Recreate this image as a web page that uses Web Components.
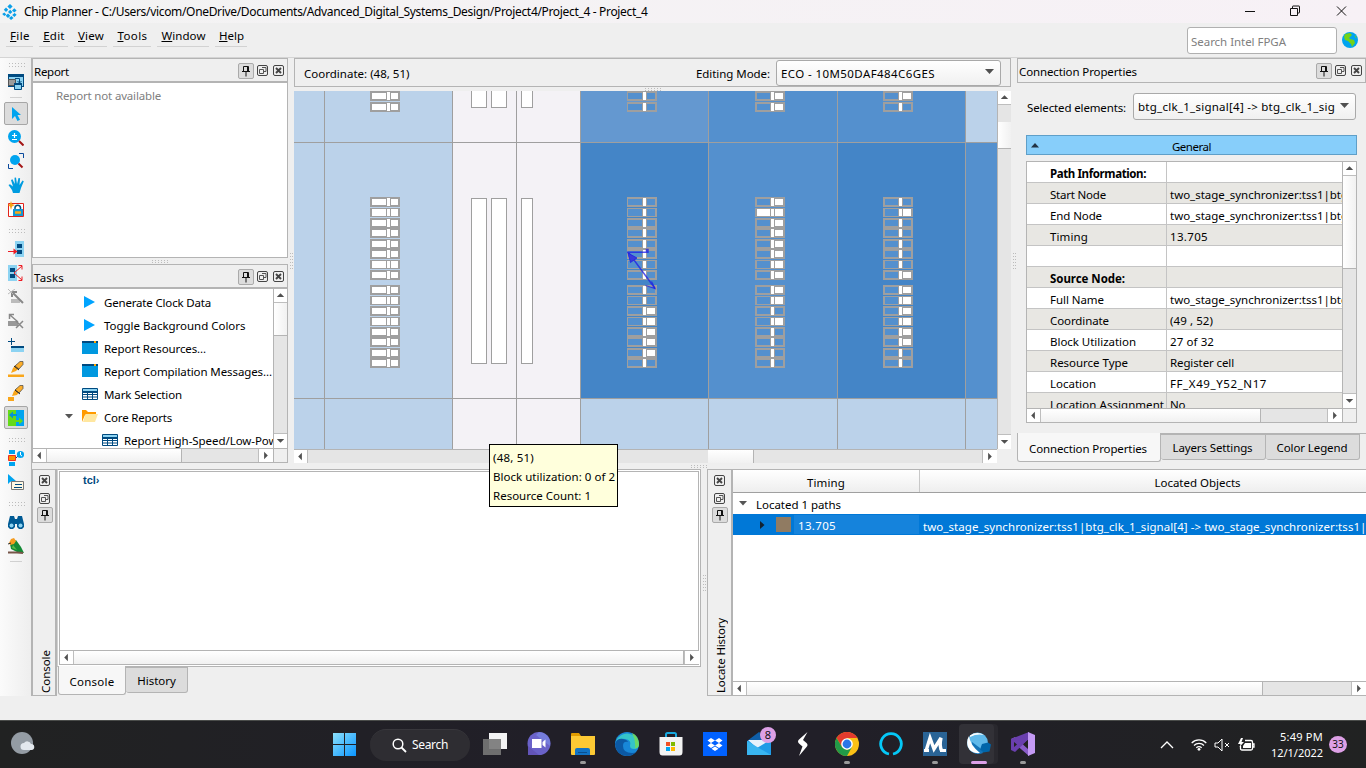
<!DOCTYPE html>
<html lang="en">
<head>
<meta charset="utf-8">
<title>Chip Planner</title>
<style>
html,body{margin:0;padding:0;width:1366px;height:768px;overflow:hidden;background:#efefef}
body{font:11.5px/16px "Noto Sans","Open Sans",sans-serif;color:#000}
</style>
</head>
<body>
<chip-planner></chip-planner>
<script>
const ICONS = {
logo:`<g fill="#0b9fe8"><path d="M8 0l2.600 2.500L8 5 5.400 2.500zM4 3.600l2.200 2.200L4 8 1.800 5.800zM8.200 5.700l2.200 2.200-2.200 2.200L6 7.900zM12.300 4.200l2.300 2.200-2.300 2.200L10 6.400zM2.300 8.500l2 2-2 1.500L.2 10zM6 9.600l2.300 2.200L6 14l-2.300-2.200zM12.600 9l2 1.800-2.200 2.300-2.200-2.200zM9.500 12l2 2L9 16l-2-2z"/></g>`,
windows:`<path fill="#004a80" d="M0 0h16v13H0z"/><path fill="#8cd3f2" d="M1 3h14v9H1z"/><path fill="#9c9c9c" stroke="#555" d="M.5 5.500h7v6h-7z"/><path d="M7 4.500h4.500V9M9.500 7l2 2 2-2" stroke="#004a80" fill="none"/><path fill="#8cd3f2" stroke="#004a80" d="M6.500 9.500h7v6h-7z"/><path fill="#004a80" d="M6 9h8v2H6z"/>`,
cursor:`<path fill="#00a4ef" d="M4 1v12l3-3 2.500 5 2.500-1.200L9.500 9H13z"/>`,
zoom:`<circle cx="6.500" cy="6.500" r="6.500" fill="#00a4ef"/><path d="M11 11l4.500 4.500" stroke="#a31515" stroke-width="2"/><path d="M4 5.500h5M6.500 3v5M4 9.500h5" stroke="#fff" stroke-width="1.200"/>`,
zoomfit:`<circle cx="7" cy="7" r="5" fill="#00a4ef"/><path d="M10.500 10.500l4 4" stroke="#a31515" stroke-width="2"/><path d="M11 .5h4.500V5M.5 11v4.500H5" stroke="#0b4a9c" fill="none"/>`,
hand:`<path fill="#009ce0" d="M5 16l-1-3-3.500-5 1.500-.7 3 2.200L3 3l1.500-.7L6.800 7 6.500.8 8 .5 9 7l1.500-6 1.600.3L11.500 8 14.500 3.500l1.300.8L13 11l-1.500 5z"/>`,
lock:`<path fill="#fff" stroke="#e2231a" d="M.5 2.500h15v13H.5z"/><path fill="#1199d6" d="M5 8h10v7H5z"/><path d="M7 8V6.500a2.800 2.800 0 015.500 0V8" stroke="#00517f" stroke-width="1.500" fill="none"/><path d="M7 11.500h6" stroke="#ffa915" stroke-width="2.500"/><path fill="#f5a316" d="M3 0l1 3 3 1-3 1.500L3 9 2 5.500 0 4l2-1z"/>`,
fanin:`<path fill="#8cd3f2" d="M7 0h9v16H7z"/><path fill="#004a80" d="M9 3h5v4H9zM9 9h5v4H9z"/><path d="M0 10.500h7" stroke="#ed1c24"/><path fill="#ed1c24" d="M5.500 7.500l4 3-4 3z"/>`,
fanout:`<path fill="#8cd3f2" d="M0 0h9v16H0z"/><path fill="#004a80" d="M2 3h5v4H2zM2 9h5v4H2z"/><path d="M6 8l8-7M6 8l8 7M10.500.5h3.500v4M10.500 15.500h3.500v-4" stroke="#ed1c24" fill="none"/>`,
grayconn:`<path fill="#bbb" d="M3 10h9v4H3z"/><path d="M4 3l11 11M4 8V3h5" stroke="#888" stroke-width="2" fill="none"/><path d="M0 5l7-5M0 0l5 5" stroke="#bbb"/>`,
graydel:`<path fill="#999" d="M0 8h10v5H0z"/><path d="M2 2l8 7M1.500 6V1.500H6M8 8l7 7M15 8l-7 7" stroke="#888" stroke-width="1.500" fill="none"/>`,
addrow:`<path d="M0 4.500h7M3.500 1v7" stroke="#004a80"/><path fill="#004a80" d="M3 9h13v3H3z"/><path fill="#8cd3f2" d="M3 11h13v4H3z"/>`,
pen:`<path fill="#f9a61a" d="M0 13.500h16V16H0zM3 12l2-5 4-4 3 3-4 4z"/><path d="M7 5l5-4.500h3v3L11 8z" fill="#fcae2b" stroke="#444" stroke-width=".7"/><path d="M6 5l5 4" stroke="#222"/>`,
pen2:`<path fill="#f9a61a" d="M0 12h6v4H0zM4 11l2-5 3-3 3 3-3 4z"/><path d="M7 5l5-4.500h3v3L11 8z" fill="#fcae2b" stroke="#444" stroke-width=".7"/><path d="M7 5l5 4" stroke="#222"/>`,
swap:`<path fill="#65da19" d="M0 0h8v16H0z"/><path fill="#00a4ef" d="M8 0h8v16H8z"/><path fill="#0092d8" d="M1 5l4-3.500V4h4v2H5v2.500z"/><path fill="#65da19" d="M15 11l-4-3.500V10H7v2h4v2.500z"/>`,
clocknode:`<path fill="#00a4ef" d="M1 0h6v4H1zM1 12h6v4H1z"/><path fill="#ff9200" stroke="#ee3124" d="M.5 5.500h7v5h-7z"/><path d="M8 8l3-3" stroke="#004a80"/><circle cx="12.500" cy="4.500" r="3.600" fill="#00a4ef"/><path d="M12.500 2v3l1.500 1" stroke="#fff" fill="none"/>`,
note:`<path fill="#00a4ef" d="M0 0v10l2.500-2.500L5 12l2-1-2-4h3z"/><path fill="#fff8e3" stroke="#777" d="M3.500 7.500h12v8h-12z"/><path d="M7 10.500h7M6 13.500h8" stroke="#004a80"/>`,
binoc:`<path fill="#005a94" d="M2 2h4l1 3h2l1-3h4l2 8v3l-2 2h-3l-2-2v-3H7v3l-2 2H2l-2-2v-3z"/><circle cx="3.500" cy="11.500" r="2" fill="#8cd3f2"/><circle cx="12.500" cy="11.500" r="2" fill="#8cd3f2"/>`,
bird:`<path fill="#138a36" d="M2 6l6-4 5 7 3 6-7-1-6-3z"/><path fill="#f59c20" d="M1 5l2-4 3-1 2 3-2 3-4 1z"/><path fill="#5aba47" d="M5 7l4 5-5-2z"/><path d="M0 14.500h9l6 .5" stroke="#765548" stroke-width="2" fill="none"/><path d="M0 6l3-1" stroke="#333"/>`,
play:`<path fill="#00a4ff" d="M2 2l11 6-11 6z"/>`,
win:`<path fill="#0098df" d="M0 2h16v12H0z"/><path fill="#004a80" d="M0 1h16v2H0z"/><path fill="#ffa600" d="M12 1h2v2h-2z"/>`,
table:`<path fill="#fff" stroke="#004a80" d="M.5 2.500h15v11H.5z"/><path fill="#8cd3f2" d="M1 3h14v2H1z"/><path d="M0 6h16" stroke="#004a80" stroke-width="2"/><path d="M0 8.500h16M0 11h16M5.500 5v8M10.500 5v8" stroke="#004a80"/>`,
folder:`<path fill="#ff9a00" d="M0 1h4l2 2h8v3H3l-3 7z"/><path fill="#ffe7a0" d="M3.500 5H16l-3 8H1z"/>`,
pin:`<path d="M5.500 8.500V3.500h5v5M4 8.500h8M9.500 3v5M8 9v4.500" stroke="#111" fill="none"/>`,
float:`<rect x="2.500" y="2.500" width="10" height="10" rx="1.500" fill="none" stroke="#444"/><path d="M7 4.500h4v4H9M4.500 6.500h4v4h-4z" fill="none" stroke="#555"/>`,
close:`<rect x="2.500" y="2.500" width="10" height="10" rx="1.500" fill="none" stroke="#444"/><path d="M5 5l5 5M10 5l-5 5" stroke="#444" stroke-width="1.900"/>`,
globe:`<circle cx="8" cy="8" r="8" fill="#00a4ef"/><path fill="#73d216" d="M3 2l5-1 2 2-3 3 1 1 4 1 1 3-3 4-1-3-3-3-3-1-1-3zM13 3l2 3-2-1z"/>`
};
const def = (tag, html, css, init) => customElements.define(tag, class extends HTMLElement {
  connectedCallback(){
    if(this.shadowRoot) return;
    this.attachShadow({mode:'open'}).innerHTML = `<style>*{box-sizing:border-box}${css}</style>` + (typeof html==='function'?html(this):html);
    if(init) init(this);
  }
});
const G='#b4b4b4';

def('ui-icon', e=>`<svg viewBox="0 0 16 16">${ICONS[e.getAttribute('n')]}</svg>`, `:host{display:block;width:16px;height:16px;flex:none}svg{display:block;width:100%;height:100%}`);

def('scroll-bar', e=>{
  const v=e.hasAttribute('v'),a=+e.getAttribute('at'),l=+e.getAttribute('len');
  const tri=v?['M3 8.500h8L7 4.500z','M3 5.500h8L7 9.500z']:['M8.500 3v8l-4-4z','M5.500 3v8l4-4z'];
  return `<i class="b"><svg width="13" height="13" viewBox="0 0 14 14"><path d="${tri[0]}"/></svg></i><i class="t" style="flex:0 0 ${a}px"></i><i class="h" style="flex:0 0 ${l}px"></i><i class="t" style="flex:1"></i><i class="b e"><svg width="13" height="13" viewBox="0 0 14 14"><path d="${tri[1]}"/></svg></i>`;
},`:host{display:flex;height:14px;border-top:1px solid ${G};background:#e5e5e5;flex:none}
:host([v]){flex-direction:column;width:14px;height:auto;border-top:0;border-left:1px solid ${G}}
i{display:block}.b{flex:0 0 14px;background:#fff;border-right:1px solid #bebebe;display:flex;align-items:center;justify-content:center}
.e{border-right:0;border-left:1px solid #bebebe;padding-right:1px}.h{background:linear-gradient(#fff,#f1f1f1);border-right:1px solid ${G}}
:host([v]) .b{border-right:0;border-bottom:1px solid #bebebe}:host([v]) .e{border-bottom:0;border-left:0;border-top:1px solid #bebebe;padding:0 0 1px}
:host([v]) .h{background:linear-gradient(90deg,#fff,#f1f1f1);border-right:0;border-bottom:1px solid ${G}}path{fill:#505050}svg{flex:none}`);

def('dock-buttons',`<b><ui-icon n="pin"></ui-icon></b><ui-icon n="float"></ui-icon><ui-icon n="close"></ui-icon>`,
`:host{display:flex;align-items:center}b{width:16px;height:16px;border:1px solid #aaa;border-radius:2px;background:#dcdcdc;display:flex;align-items:center;justify-content:center;margin-right:1px}
:host([v]){flex-direction:column-reverse}:host([v]) b{margin:0}:host([v]) ui-icon[n=close]{margin-bottom:2px}`);

def('dock-title',`<slot></slot><dock-buttons></dock-buttons>`,
`:host{display:flex;height:25px;border:1px solid ${G};border-bottom:2px solid ${G};align-items:center;padding:4px 0 0 1px;background:#efefef;flex:none}dock-buttons{margin:var(--btn-top,-3px) 0 0 auto}`);

def('split-grip',`<i></i>`,`:host{display:flex;align-items:center;justify-content:center;flex:none}
i{background:conic-gradient(from 270deg at 1px 1px,#bcbcbc 90deg,transparent 0) 0 0/3px 2px;width:16px;height:3px}:host([v]) i{width:3px;height:16px;background-size:2px 3px}`);

def('combo-box',`<slot></slot><svg width="9" height="6"><path d="M0 0h9L4.500 5z" fill="#505050"/></svg>`,
`:host{display:flex;align-items:center;border:1px solid #a9a9a9;border-radius:3px;background:linear-gradient(#fff,#f0f0f0);padding:2px 6px 0 4px;overflow:hidden;white-space:nowrap}svg{margin:-3px 0 0 auto;flex:none}`);

def('tool-bar',()=>{
  const g='<i class="g"></i>', ic=(n,h=24)=>`<span style="height:${h}px"><ui-icon n="${n}"></ui-icon></span>`, on=n=>`<span class="on"><ui-icon n="${n}"></ui-icon></span>`;
  return '<i class="g first"></i>'+ic('windows')+'<i class="s"></i>'+on('cursor')+ic('zoom',23)+ic('zoomfit')+ic('hand')+ic('lock')+g+ic('fanin')+ic('fanout')+ic('grayconn')+ic('graydel')+ic('addrow')+ic('pen')+ic('pen2')+on('swap')+g+ic('clocknode')+ic('note')+g+ic('binoc')+ic('bird')+'<i class="s"></i>';
},`:host{display:flex;flex-direction:column;align-items:center;width:31px;background:linear-gradient(90deg,#fbfbfb,#eee);flex:none;padding-top:4px}
span{display:flex;align-items:center;flex:none}.on{width:24px;height:23px;border:1px solid #a6a6a6;border-radius:2px;background:#dcdcdc;justify-content:center;margin:1px 0 1px 0}
.g{width:16px;height:4px;margin:8px 0 4px 2px;flex:none;background:conic-gradient(from 270deg at 1px 1px,#bcbcbc 90deg,transparent 0) 0 0/3px 3px}
.g.first{margin-top:1px;margin-bottom:3px}
.s{width:12px;height:1px;background:#d0d0d0;margin:3px 0 3px;flex:none}`);

def('task-row',e=>`${e.hasAttribute('open')?'<svg width="8" height="5"><path d="M0 0h8L4 4.500z" fill="#555"/></svg>':''}<ui-icon n="${e.getAttribute('icon')}"></ui-icon><slot></slot>`,
`:host{display:flex;height:23px;padding-left:49px;align-items:center;white-space:nowrap}
:host([sub]){padding-left:69px}:host([open]){padding-left:32px}svg{margin:-2px 9px 0 0;flex:none}ui-icon{margin:-2px 6px 0 0}`);

def('prop-row',e=>`<div><slot></slot></div><div class="v"><slot name="v"></slot></div>`,
`:host{display:grid;grid-template-columns:139px 1fr;height:21px;border-bottom:1px solid #c4c4c4;background:#fff;white-space:nowrap}
:host(:nth-child(even)){background:#e8e7e3}div{padding:4px 0 0 23px;overflow:hidden;height:20px;line-height:16px}.v{border-left:1px solid #c4c4c4;padding-left:3px}:host([hd]){font-weight:700}`);

def('chip-map',()=>{
  let s='';const r=(x,y,w,h,f)=>s+=`<rect x="${x}" y="${y}" width="${w}" height="${h}" fill="${f}"/>`;
  const L='#bbd2ea',W='#f4f2f6',M='#5490ce',D='#4485c7',Gr='#9f9f9f';
  r(294,91,158,358,L);r(452,91,128,358,W);r(580,91,128,51,'#6498d0');r(708,91,257,51,M);r(965,91,32,51,L);
  r(580,142,128,256,D);r(708,142,129,256,M);r(837,142,128,256,D);r(965,142,32,256,M);r(580,398,417,51,L);
  [324,452,516,580,708,837,965].forEach(x=>r(x,91,1,358,Gr));[142,398].forEach(y=>r(294,y,703,1,Gr));
  [[471,16],[491,16],[521,12]].forEach(([x,w])=>{[[80,28],[198,166]].forEach(([y,h])=>{r(x,y,w,h,Gr);r(x+1,y+1,w-2,h-2,'#fff')})});
  const ys=[91,102,197,208,218,228,239,249,260,270,285,296,306,317,327,337,348,358];
  const cols=[[370,'all','all'],[627,[12,13,14,15,16],[]],[755,[0,1,2,3,4,5,6,7,8,9,10,11,13],[3]],[883,[0,3,9,10,11,12,13,14,15],[]]];
  cols.forEach(([x,rt,lf])=>ys.forEach((y,i)=>{
    const short=[208,260,296,317].includes(y), h=short?9:10, lt=x===370, on=a=>a==='all'||a.includes(i);
    const l0=x===627?1:2,l1=lt?16:15,b=lt?17:16,q=lt?21:20;
    r(x,y,30,h,Gr);r(x+l0,y+(short?1:2),l1-l0,short?7:6,on(lf)?'#fff':M);r(x+b,y+1,3,short?7:8,'#fff');r(x+q,y+(short?1:2),28-q,short?7:6,on(rt)?'#fff':M);
  }));
  s+=`<g stroke="#1e1ee6" stroke-opacity=".75" fill="none"><path stroke-width="1.500" d="M627 252.200h19.500v-2.700h1.500v3.500M628.500 252.500L655 288.500"/><path fill="#3a3ad8" d="M628 253l9 5-6.500 4.500z"/><path stroke-width="1.200" d="M645.500 285.500l9.500 3-3.500-7"/></g>`;
  return `<svg width="703" height="358" viewBox="294 91 703 358">${s}</svg>`;
},`:host{display:block;width:703px;height:358px}svg{display:block}`);

def('dock-side',`<dock-buttons v></dock-buttons><div><slot></slot></div>`,
`:host{display:flex;flex-direction:column;align-items:center;width:26px;border:1px solid ${G};border-right-width:2px;flex:none;padding-top:3px}div{margin-top:auto;writing-mode:vertical-rl;transform:rotate(180deg);padding-top:2px;line-height:17px;margin-right:-2px}`);

def('tab-item',`<slot></slot>`,`:host{display:flex;align-items:center;justify-content:center;height:26px;background:#dcdcdc;border:1px solid ${G};border-left-width:0;border-radius:0 0 3px 3px;flex:none;padding:2px 1px 0 0}
:host([on]){height:28px;background:#f7f7f7;border-top:0;border-left-width:1px;padding:3px 2px 0 0}`);

def('report-panel',`<dock-title><t-x w="35">Report</t-x></dock-title><div><t-x w="105">Report not available</t-x></div>`,
`:host{display:flex;flex-direction:column;height:200px;flex:none}div{flex:1;background:#fff;border:1px solid ${G};border-top:0;padding:5px 0 0 23px;color:#808080}`);

def('tasks-panel',`<dock-title><t-x w="30">Tasks</t-x></dock-title><section><div class="r"><div class="l">
<task-row icon="play"><t-x w="107">Generate Clock Data</t-x></task-row><task-row icon="play"><t-x w="141.500">Toggle Background Colors</t-x></task-row>
<task-row icon="win"><t-x w="102">Report Resources...</t-x></task-row><task-row icon="win"><t-x w="168">Report Compilation Messages...</t-x></task-row>
<task-row icon="table"><t-x w="78">Mark Selection</t-x></task-row><task-row open icon="folder"><t-x w="68">Core Reports</t-x></task-row>
<task-row sub icon="table"><t-x w="153.500">Report High-Speed/Low-Pow</t-x></task-row></div><scroll-bar v at="0" len="33"></scroll-bar></div>
<div class="h"><scroll-bar at="0" len="135"></scroll-bar><i></i></div></section>`,
`:host{display:flex;flex-direction:column;height:199px;flex:none}section{display:flex;flex-direction:column;flex:1;min-height:0;background:#fff;border:1px solid ${G};border-top:0}
.r{display:flex;flex:1;min-height:0}.l{flex:1;overflow:hidden;padding-top:2px;min-width:0}.h{display:flex}.h scroll-bar{flex:1}.h i{width:14px;border:solid ${G};border-width:1px 0 0 1px;background:#efefef}`);

def('floor-panel',`<header><t-x w="105.500">Coordinate: (48, 51)</t-x><span></span><t-x w="74">Editing Mode:</t-x><combo-box><t-x w="154">ECO - 10M50DAF484C6GES</t-x></combo-box></header>
<split-grip></split-grip><main><chip-map></chip-map><scroll-bar v at="17" len="27"></scroll-bar></main><footer><scroll-bar at="400" len="46"></scroll-bar></footer>
<aside><t-x w="41">(48, 51)</t-x><t-x w="122">Block utilization: 0 of 2</t-x><t-x w="98">Resource Count: 1</t-x></aside>`,
`:host{display:flex;flex-direction:column;width:717px;flex:none;position:relative}header{height:29px;border:1px solid ${G};display:flex;align-items:center;padding:1px 9px 0 9px}
header>t-x{margin-top:2px}span{flex:1}combo-box{width:225px;height:26px;margin:-1px 0 0 6px}split-grip{height:4px}main{display:flex}main scroll-bar{height:358px}footer{width:703px;display:flex}footer scroll-bar{flex:1}
aside{position:absolute;left:195px;top:386px;width:129px;height:63px;background:#ffffdc;border:1px solid #000;display:flex;flex-direction:column;padding:3px 3px;line-height:19px}`);

const N='two_stage_synchronizer:tss1|btg';
const P=[['Path Information:',96,'',0,1],['Start Node',56,N,178],['End Node',52,N,178],['Timing',38,'13.705',38],['',0,'',0],['Source Node:',75,'',0,1],['Full Name',54,N,178],['Coordinate',59,'(49 , 52)',43],['Block Utilization',86,'27 of 32',44],['Resource Type',78,'Register cell',64],['Location',46,'FF_X49_Y52_N17',97],['Location Assignment',114,'No',15]];
def('connection-panel',`<dock-title><t-x w="118">Connection Properties</t-x></dock-title>
<div class="sel"><t-x w="99">Selected elements:</t-x><combo-box><t-x w="197">btg_clk_1_signal[4] -&gt; btg_clk_1_sig</t-x></combo-box></div>
<div class="gen"><svg width="8" height="5"><path d="M0 4.500h8L4 0z" fill="#234"/></svg><t-x w="39">General</t-x></div>
<div class="tb"><div class="r"><div class="l">${P.map(p=>`<prop-row ${p[4]?'hd':''}>${p[0]?`<t-x w="${p[1]}">${p[0]}</t-x>`:''}${p[2]?`<t-x slot="v" w="${p[3]}">${p[2]}</t-x>`:''}</prop-row>`).join('')}</div><scroll-bar v at="0" len="93"></scroll-bar></div>
<div class="h"><scroll-bar at="0" len="220"></scroll-bar><i></i></div></div>
<div class="tabs"><tab-item on style="width:144px"><t-x w="118">Connection Properties</t-x></tab-item><tab-item style="width:105px"><t-x w="80">Layers Settings</t-x></tab-item><tab-item style="width:94px"><t-x w="71">Color Legend</t-x></tab-item></div>`,
`:host{display:flex;flex-direction:column;flex:1;min-width:0}dock-title{border-bottom-width:1px;padding-top:2px;--btn-top:-1px}.sel{display:flex;align-items:center;margin:10px 10px 0 10px;justify-content:space-between}.sel t-x{margin-top:2px}combo-box{width:223px;height:27px}.sel combo-box t-x{margin-top:-2px}
.gen{margin:15px 9px 0;height:20px;background:#87cefa;border:1px solid #5f9fc8;display:grid;grid-template-columns:8px 1fr 8px;padding:0 4px;align-items:center;justify-items:center}.gen t-x{margin-top:3px}
.tb{margin:6px 9px 0;height:262px;border:1px solid ${G};display:flex;flex-direction:column;background:#fff}.r{display:flex;flex:1;min-height:0}.l{flex:1;min-width:0;overflow:hidden}.h{display:flex}.h scroll-bar{flex:1}.h i{width:14px;border:solid ${G};border-width:1px 0 0 1px;background:#efefef}
.tabs{display:flex;margin-top:10px;border-top:1px solid ${G};align-items:flex-start}.tabs tab-item[on]{margin-top:-1px;height:29px}`);

def('console-panel',`<dock-side><t-x w="43">Console</t-x></dock-side><section><div class="o"><div class="i"><p>tcl›</p><scroll-bar at="0" len="610"></scroll-bar></div></div>
<div class="tabs"><tab-item on style="width:68px"><t-x w="45">Console</t-x></tab-item><tab-item style="width:62px"><t-x w="38.500">History</t-x></tab-item></div></section>`,
`:host{display:flex;width:669px;flex:none}dock-side{width:25px;padding-left:1px}section{flex:1;display:flex;flex-direction:column;min-width:0}.o{height:198px;border:1px solid ${G};border-left:1px solid #d0d0d0;padding:1px;background:#fff}.i{height:194px;border:1px solid ${G};display:flex;flex-direction:column}
p{margin:0;flex:1;padding:0 0 0 23px;font:700 11px/16px "Liberation Sans",sans-serif;color:#004a80}.tabs{display:flex;align-items:flex-start;padding-left:1px}.tabs tab-item{padding:1px 0 0}.tabs tab-item[on]{margin-top:-1px;padding:3px 0 0;height:29px}`);

def('locate-panel',`<dock-side><t-x w="75">Locate History</t-x></dock-side><section><header><span><t-x w="38">Timing</t-x></span><span><t-x w="86">Located Objects</t-x></span></header>
<div class="a"><svg width="8" height="5"><path d="M0 0h8L4 4.500z" fill="#555"/></svg><t-x w="85">Located 1 paths</t-x></div>
<div class="b"><svg width="5" height="8"><path d="M0 0v8l4.500-4z" fill="#123"/></svg><i></i><span><t-x w="38">13.705</t-x></span><t-x w="443.500">two_stage_synchronizer:tss1|btg_clk_1_signal[4] -&gt; two_stage_synchronizer:tss1|</t-x></div>
<em></em><scroll-bar at="0" len="516"></scroll-bar></section>`,
`:host{display:flex;flex:1;min-width:0}section{flex:1;min-width:0;display:flex;flex-direction:column;background:#fff;border:solid ${G};border-width:1px 0;overflow:hidden}
header{display:flex;height:23px;background:linear-gradient(#fff,#eee);border-bottom:1px solid #a0a0a0;flex:none}header span{display:flex;align-items:center;justify-content:center;padding-top:3px;flex:none}header span:first-child{width:187px;border-right:1px solid #c8c8c8}header span:last-child{width:555px}
.a{display:flex;height:21px;align-items:center;padding:3px 0 0 6px;flex:none}.a svg{margin:-4px 9px 0 0}.b{display:flex;height:21px;background:#0078d7;color:#fff;align-items:center;padding-left:27px;flex:none;white-space:nowrap}
.b svg{margin-right:11px;flex:none}i{width:15px;height:15px;background:#907b62;flex:none;margin-top:-1px}.b span{width:125px;height:19px;background:#1583dc;padding:3px 0 0 4px;margin:0 4px 0 3px;flex:none}.b>t-x{margin:4px 0 0 0}em{flex:1}`);

const T=(x)=>`<svg viewBox="0 0 24 24" width="24" height="24">${x}</svg>`;
const APPS=[
['',`<path fill="#fff" d="M6 1h18v16H6z" opacity=".95"/><path fill="#777" opacity=".9" d="M0 7h18v16H0z"/>`],
['',`<circle cx="12" cy="11.500" r="11.500" fill="#6a62c9"/><path fill="#7d8fe8" d="M12 0a11.500 11.500 0 0111 14L9 3z" opacity=".6"/><path d="M1 14v9h11z" fill="#6254b8"/><path fill="#fff" d="M5 7h9.500v9H5zM15.500 10l3-2.500v8l-3-2.500z"/>`],
['d',`<path fill="#e09b00" d="M0 2q0-1 1-1h7l2 3h-10z"/><path fill="#fcc934" d="M0 4h24v18q0 1-1 1H1q-1 0-1-1z"/><path fill="#1173c4" d="M4 23v-5q0-2 2-2h11q2 0 2 2v5z"/><path fill="#0a4f8f" d="M7 20h9v1H7z"/>`],
['',`<circle cx="12" cy="12" r="12" fill="#1887d8"/><path fill="#35c4c9" d="M1 9A12 12 0 0124 12q0 5-5 5-4 0-4-3 2-6-5-7Q5 6 1 9z"/><path fill="#6fda5c" d="M17 1A12 12 0 0124 12q0 4-4 4.500Q21 8 17 1z" opacity=".9"/><path fill="#0c59a4" d="M0 12Q2 6 8 7q4 .5 5 3-5-1-5 4 0 7 9 7 3 0 4-1-4 4-9 4Q1 23 0 12z"/>`],
['',`<path d="M7 6V2.500Q7 1 8.500 1h7Q17 1 17 2.500V6" stroke="#17a9e0" stroke-width="2" fill="none"/><path fill="#f3f3f3" d="M.5 5h23v15q0 3.500-3 3.500h-17q-3 0-3-3.500z"/><path fill="#f25022" d="M7 10h4v4H7z"/><path fill="#7fba00" d="M12 10h4v4h-4z"/><path fill="#00a4ef" d="M7 15h4v4H7z"/><path fill="#ffb900" d="M12 15h4v4h-4z"/>`],
['',`<path fill="#0061fe" d="M0 0h24v24H0z"/><path fill="#fff" d="M8 6l4 2.500L8 11 4.500 8.500zM16 6l3.500 2.500L16 11l-4-2.500zM8 11l4 2.500L8 16l-3.500-2.500zM16 11l3.500 2.500L16 16l-4-2.500zM12 14.500l3.500 2.300L12 19l-3.500-2.200z"/>`],
['m',`<path fill="#0f5ea8" d="M0 9L12 0l12 9z"/><path fill="#1f9be6" d="M0 9h24v14H0z"/><path fill="#e6f2fb" d="M1 8h22L10 16z"/><path fill="#39b5f0" d="M0 23V9l24 14z"/>`],
['',`<path fill="#fff" d="M16.500 0L8 7.500q-2 2 0 4l3.500 3L8 24l7.500-9q2-2 0-4L12 8z"/>`],
['d',`<circle cx="12" cy="12" r="12" fill="#fbc116"/><path fill="#e33b2e" d="M1.600 6A12 12 0 0122.400 6H12L7 15z"/><path fill="#229a48" d="M1.600 6A12 12 0 0012 24l5-9-5 3-5-3z"/><circle cx="12" cy="12" r="5.800" fill="#fff"/><circle cx="12" cy="12" r="4.400" fill="#2b76e8"/>`],
['',`<path d="M10 22A10.300 10.300 0 1114 22" stroke="#05c8f7" stroke-width="2.800" fill="none"/>`],
['d',`<path fill="#2a6496" d="M0 0h24v24H0z"/><path fill="none" stroke="#fff" stroke-width="3.400" d="M3 19L7 6l4 11 7-11q-2 9 1 13"/><path fill="#fff" d="M1 17h5v3H1zM17 17h6v3h-6z"/>`],
['on',`<circle cx="10.500" cy="11" r="10.500" fill="#5fb9ea"/><path fill="#1474b8" d="M3 18a10.500 10.500 0 0013 3l-3-5-8-6z"/><path fill="#fff" d="M2 4q1 9 11 17-9 1-12-6-2-6 1-11zM3 3.500q7-4.500 14-.5-7-1.500-14 2z"/><path fill="#0065a9" d="M15 12l6-1.500 3 2-1.500 7-6.500 1-3-3z"/>`],
['d',`<path fill="#8a5cc8" d="M0 7l4-2 14 12v7L4 12z"/><path fill="#6a3fae" d="M0 7v11l4 2L18 7V0z"/><path fill="#c49af5" d="M17 0l7 3v18l-7 3z"/><path fill="#222" d="M3 10v5l3-2.500zM17 8v9l-5-4.500z"/>`]];
def('task-bar',`<div class="w"><svg width="24" height="23"><circle cx="11" cy="11" r="11" fill="#949ca4"/><path fill="#e3e8ee" d="M13 18a3.500 3.500 0 010-7 4 4 0 017 1 3 3 0 01.500 6z"/></svg></div>
<svg class="st" width="23" height="23"><defs><linearGradient id="g" x2="1" y2="1"><stop stop-color="#8ce0fb"/><stop offset="1" stop-color="#0a95ff"/></linearGradient></defs><path fill="url(#g)" d="M0 0h11v11H0zM12 0h11v11H12zM0 12h11v11H0zM12 12h11v11H12z"/></svg>
<div class="s"><svg width="15" height="15"><circle cx="6" cy="6" r="4.800" fill="none" stroke="#fff" stroke-width="1.500"/><path d="M9.500 9.500l4.500 4.500" stroke="#fff" stroke-width="1.800"/></svg><t-x w="36">Search</t-x></div>
<nav>${APPS.map(a=>`<div class="app ${a[0]}">${T(a[1])}${a[0]==='m'?'<b>8</b>':''}<u></u></div>`).join('')}</nav>
<div class="tray"><svg width="14" height="8"><path d="M1 7l6-6 6 6" stroke="#fff" fill="none" stroke-width="1.300"/></svg>
<svg width="16" height="13" viewBox="0 0 16 13"><g fill="none" stroke="#fff" stroke-width="1.200"><path d="M.7 5a10.300 10.300 0 0114.600 0M3 7.500a7 7 0 0110 0M5.300 9.800a4 4 0 015.400 0"/></g><circle cx="8" cy="11.300" r="1.400" fill="#fff"/></svg>
<svg width="16" height="14"><path d="M1 5h3l4-4v12L4 9H1zM11 5l4 4M15 5l-4 4" stroke="#fff" fill="none"/></svg>
<svg width="17" height="14"><path d="M7 2.500h6q1.500 0 1.500 1.500v6.500q0 1.500-1.500 1.500H4Q2.500 12 2.500 10.500V8M15 6h1v3h-1" stroke="#fff" fill="none" stroke-width="1.300"/><path fill="#fff" d="M7 5h6v5H5V8zM3 0L0 6h2.500L1.500 9 6 4H3.500L5 0z"/></svg>
<p><t-x w="43">5:49 PM</t-x><br><t-x w="52">12/1/2022</t-x></p><b>33</b></div>`,
`:host{display:grid;grid-template-columns:333px 23px 14px 100px 3px 1fr auto;height:48px;background:linear-gradient(90deg,#212222,#211f28 40%,#211f28 60%,#212222);color:#fff;align-items:center;border-top:1px solid #4a4c4a;font-size:12px;flex:none}
.w{padding:0 0 2px 11px}.w svg,.st{display:block}.s{grid-column:4;height:32px;border-radius:16px;background:#2e2d32;border-top:1px solid #38373c;display:flex;align-items:center;padding-left:22px;gap:5px}
nav{grid-column:6;display:flex}.app{width:44px;height:47px;display:flex;justify-content:center;align-items:center;position:relative}.app>svg{margin-top:-1px}u{position:absolute;bottom:4px;width:6px;height:3px;border-radius:2px;text-decoration:none}.d u{background:#9a9a9a}
.on:before{content:"";position:absolute;left:2px;top:3px;width:39px;height:40px;border-radius:4px;background:#29282e}.on:after{content:"";position:absolute;left:2px;top:3px;width:35px;height:40px;border-radius:4px;background:#323137}.on>svg{z-index:1}.on u{background:#dca0e8;width:16px;z-index:2}
.m b{position:absolute;left:23px;top:6px;width:16px;height:16px}b{background:#dda0e6;color:#111;border-radius:50%;font-weight:400;font-size:11px;line-height:16px;text-align:center}
.tray{display:flex;align-items:center}.tray>svg:nth-child(1){margin-right:17px}.tray>svg:nth-child(2){margin-right:7px}.tray>svg:nth-child(3){margin-right:8px}.tray>svg:nth-child(4){margin-right:16px}
p{margin:0;text-align:right;line-height:16px;font-size:11px}.tray b{width:18px;height:17px;line-height:17px;font-size:10px;margin:-1px 19px 0 6px}`);

const MENU=[['File',20,27],['Edit',21.5,29],['View',26,33],['Tools',30,38],['Window',44,52],['Help',25,32]];
def('chip-planner',`<header><ui-icon n="logo"></ui-icon><t-x w="623.500">Chip Planner - C:/Users/vicom/OneDrive/Documents/Advanced_Digital_Systems_Design/Project4/Project_4 - Project_4</t-x>
<svg width="104" height="12"><g fill="none" stroke="#111"><path d="M0 6.500h10M45.500 3.500h7v7h-7zM47.500 3V1.500q0-.5.5-.5h6q.5 0 .5.500v6q0 .5-.5.500h-1.500M92 1.500l9 9M101 1.500l-9 9"/></g></svg></header>
<nav>${MENU.map(m=>`<a style="width:${m[2]}px"><t-x w="${m[1]}"><u>${m[0][0]}</u>${m[0].slice(1)}</t-x></a>`).join('')}<span></span><div class="in"><t-x w="95">Search Intel FPGA</t-x></div><ui-icon n="globe"></ui-icon></nav>
<main><tool-bar></tool-bar><section><div class="top"><div class="left"><report-panel></report-panel><split-grip></split-grip><tasks-panel></tasks-panel></div><split-grip v></split-grip><floor-panel></floor-panel><split-grip v></split-grip><connection-panel></connection-panel></div>
<split-grip class="hs"></split-grip><div class="bot"><console-panel></console-panel><split-grip v></split-grip><locate-panel></locate-panel></div></section></main><div class="status"></div><task-bar></task-bar>`,
`:host{display:flex;flex-direction:column;width:1366px;height:768px;background:#efefef;overflow:hidden}
header{height:23px;display:flex;align-items:center;background:linear-gradient(90deg,#f3f3f3,#f7f1f6);padding:0 17px 0 2px;font-size:12px;flex:none;gap:6px}header>svg{margin:-2px 0 0 auto}
nav{height:35px;display:flex;align-items:flex-start;padding:0 8px 0 6px;gap:6px;border-bottom:1px solid #d4d4d4;flex:none}a{height:24px;border-bottom:1px solid #d2d2d2;padding:5px 0 0 1px;text-align:center;white-space:nowrap}span{flex:1}
.in{width:150px;height:27px;border:1px solid #b0b0b0;border-radius:3px;background:#fff;color:#808080;margin-top:4px;padding:6px 0 0 3px;margin-right:-1px}nav ui-icon{margin-top:9px}
main{display:flex;height:638px;flex:none}section{flex:1;display:flex;flex-direction:column;border-left:1px solid ${G};min-width:0}.top{display:flex;height:405px}.left{width:256px;flex:none}.left split-grip{height:6px}split-grip[v]{width:6px}.hs{height:6px}.bot{display:flex;height:227px}.status{height:24px;flex:none}`);

/* t-x sets a label to the exact width of its w attribute by tracking */
const ctx=document.createElement('canvas').getContext('2d');
customElements.define('t-x', class extends HTMLElement{
  connectedCallback(){
    if(!this.shadowRoot) this.attachShadow({mode:'open'}).innerHTML='<style>:host{display:inline-block;white-space:nowrap;flex:none}</style><slot></slot>';
    const s=getComputedStyle(this), t=this.textContent, w=+this.getAttribute('w');
    ctx.font=`${s.fontWeight} ${s.fontSize} ${s.fontFamily}`;
    this.style.letterSpacing=((w-ctx.measureText(t).width)/t.length).toFixed(3)+'px';
  }
});
</script>
</body>
</html>
